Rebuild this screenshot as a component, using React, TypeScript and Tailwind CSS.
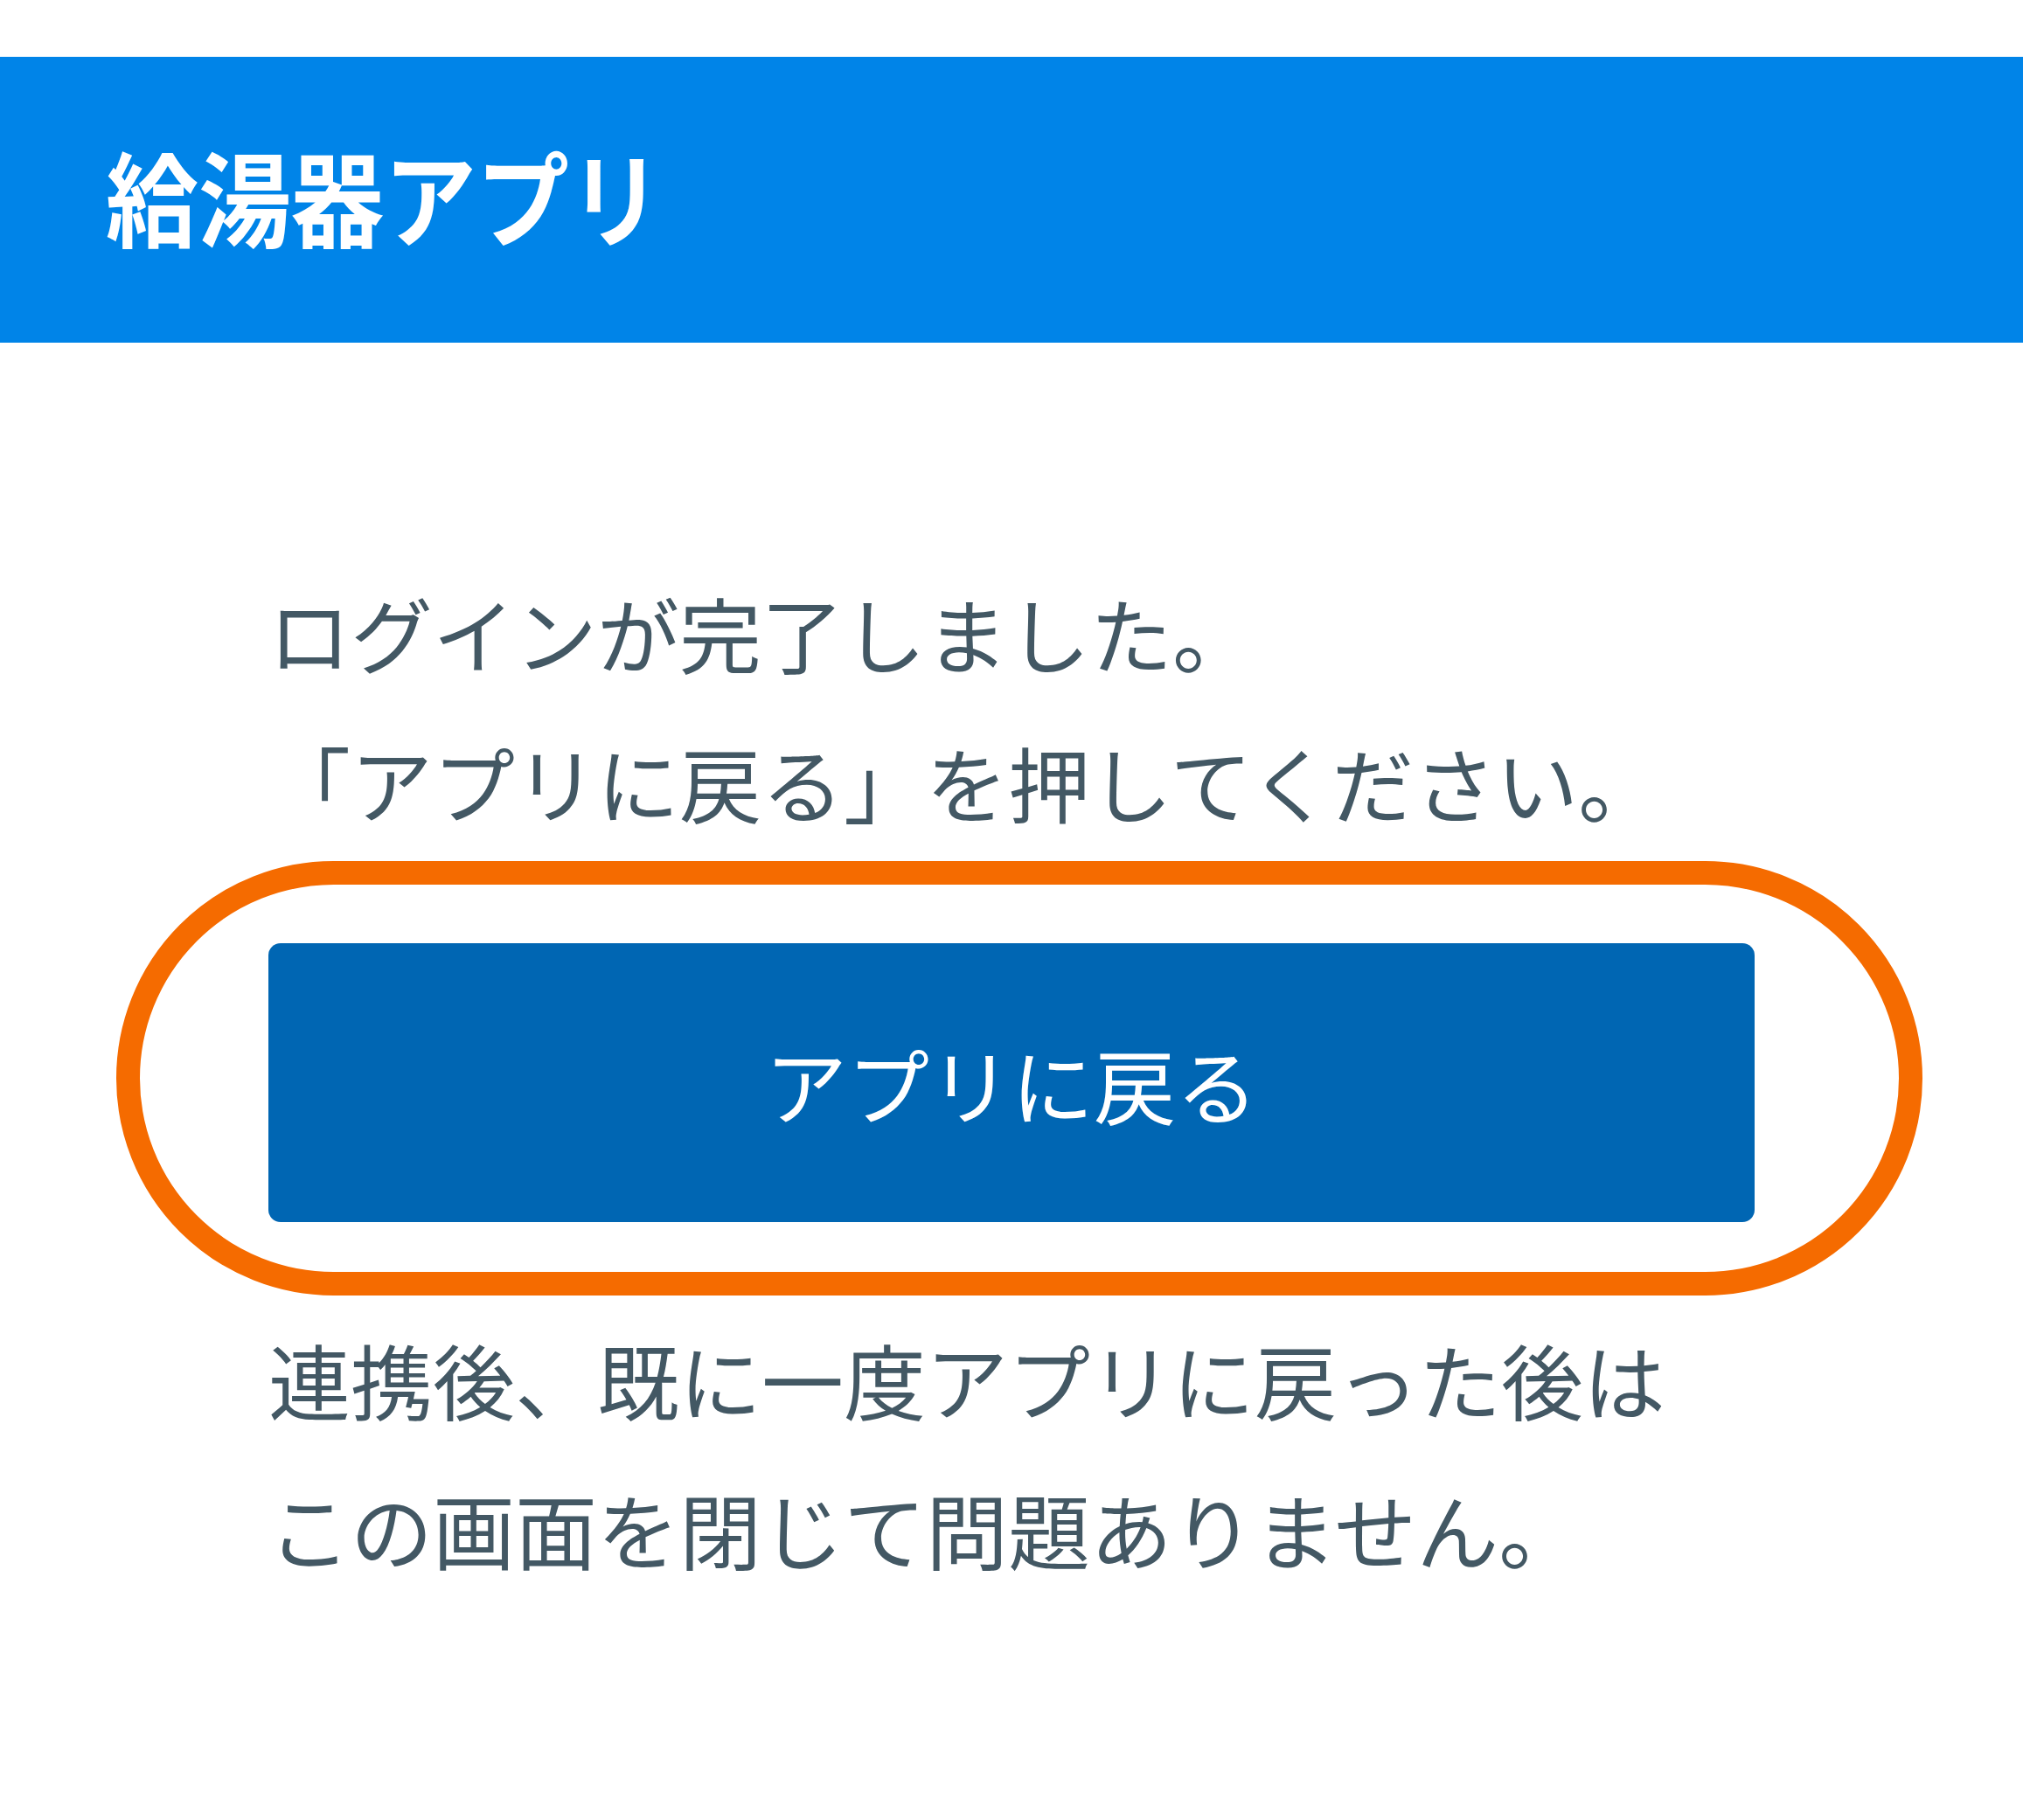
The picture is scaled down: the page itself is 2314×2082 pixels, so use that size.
export default function App() {
  return (
    <div className="min-h-screen bg-white pt-[65px] font-['Noto_Sans_CJK_JP',sans-serif]">
      <header className="h-[327px] bg-[#0084e8] flex items-center pl-[121px]">
        <h1 className="text-white font-bold text-[106px] leading-none -mt-[14px] scale-y-[1.12] origin-center">給湯器アプリ</h1>
      </header>

      <main className="px-[307px] pt-[246px] text-[#435864]">
        <p className="text-[94px] leading-[171px]">
          ログインが完了しました。
          <br />
          「アプリに戻る」を押してください。
        </p>

        <div className="relative mt-[99px]">
          {/* orange highlight ring around the button */}
          <div className="absolute -left-[174px] -right-[192px] -top-[94px] -bottom-[84px] rounded-full border-[27px] border-[#f56b00] pointer-events-none"></div>
          <button className="relative w-full h-[319px] rounded-[14px] bg-[#0066b3] text-white text-[94px] leading-none">
            アプリに戻る
          </button>
        </div>

        <p className="mt-[94px] text-[94px] leading-[171px]">
          連携後、既に一度アプリに戻った後は
          <br />
          この画面を閉じて問題ありません。
        </p>
      </main>
    </div>
  );
}
